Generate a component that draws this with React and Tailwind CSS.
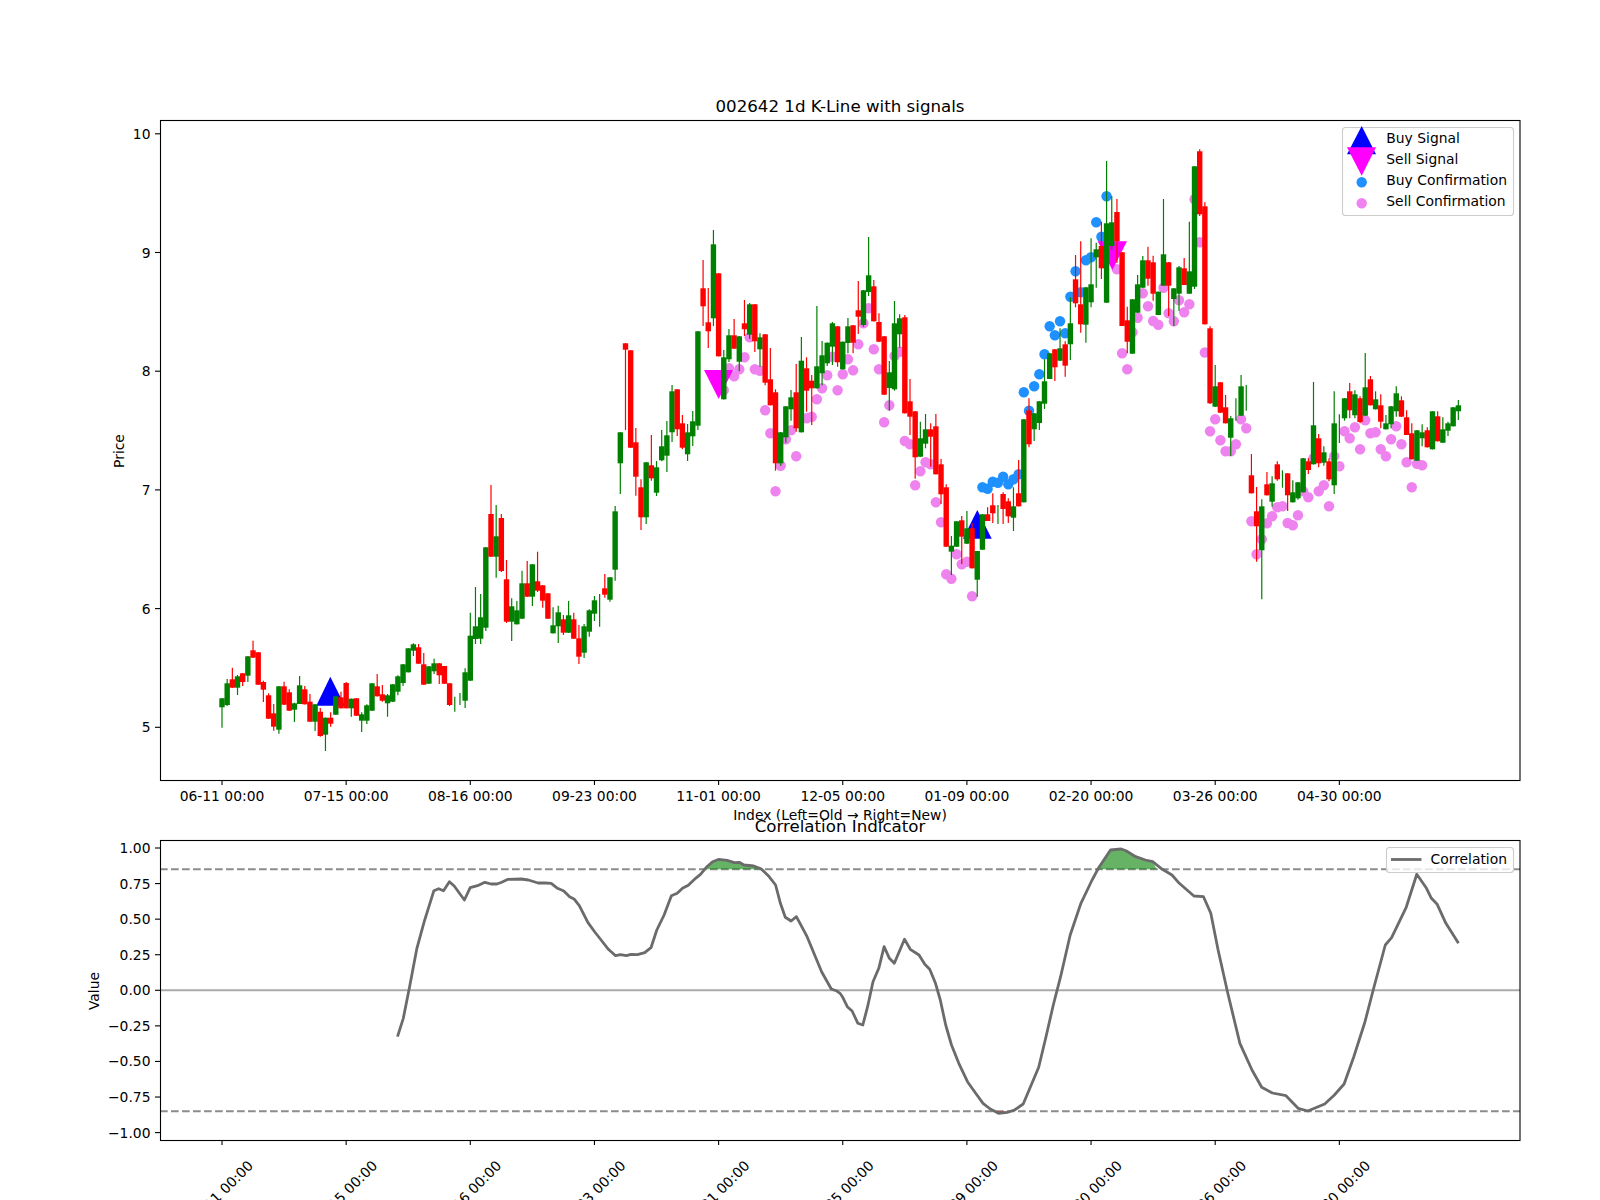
// K-line + correlation chart, values traced from the screenshot in page pixels
const candleX = (i) => 222 + 5.173 * i;

const COLORS = { r: "#ff0000", g: "#008000" };

// [color, bodyTop, bodyBottom, wickTop, wickBottom]
const candles = [
  ["g",698.3,707.3,698,727.7],["g",683.3,705,679,706],["r",679.3,687.7,667.7,688],["g",676.3,687.7,675,695],
  ["r",673.3,682,673,686],["g",656.3,675.7,656,682],["r",650.3,657.7,640.7,658],["r",652.3,684.7,652,685],
  ["r",682,689.7,680.7,702],["r",695.3,718.7,693.3,719],["r",713.3,726.7,704,730.7],["g",686.3,729.7,686,733.7],
  ["r",686.3,704.7,681.7,705],["r",692.3,710.7,689.3,711],["g",703.3,709.7,702.7,722],["g",685.3,704,676,704],
  ["r",689.3,704.3,686,704.5],["r",701.7,721.7,694,722],["g",704.3,721.7,704,731],["r",711.7,736,708,736.7],
  ["g",717.7,734.7,717.5,751],["r",717.7,723.7,712.3,726.7],["g",696.3,714.7,696,715],["r",697.3,708.3,691.7,708.5],
  ["r",683,708.3,682,708.5],["g",698.7,708.3,698.5,716.7],["r",698.3,715.7,698,716],["g",714.3,720.7,712.3,732],
  ["g",705.3,720.7,704.3,724],["g",683.3,710.7,683,711],["r",686.3,696.3,674,696.5],["r",694.3,700.7,685,701.7],
  ["g",695.3,703.3,694,716.7],["g",684.3,701.7,684,702],["g",676.3,691.7,675.3,695.3],["g",664.3,683,664,686],
  ["g",648.3,672.3,648,672.5],["g",644.3,650.7,643.3,656],["r",647.3,663.7,644,664],["r",664.3,684.7,653,685],
  ["g",666.3,683.7,666,684],["g",663.3,671.3,658.7,674],["r",663.3,675.3,663,684],["r",666,683.7,666,684],
  ["r",683.3,705,683,706],["g",704,704,696.7,711.7],["g",699,699,693,705],["g",672.3,700.7,668.3,708],
  ["g",635.7,680.7,612.7,681],["g",626.3,639,587,644],["g",617.3,638.7,594,644],["g",547.3,627.7,547,631],
  ["r",514,556.7,485,557],["g",536.3,556.7,505,577.7],["r",518,571,514,572],["r",579.3,621.7,560,623],
  ["g",606.3,621.7,598.3,641],["g",610.3,624.3,601,624.5],["g",583.3,618.7,570.7,619],["r",583.3,596.7,561,597],
  ["g",564.3,596.7,564,606],["r",581.3,590.7,551.7,592],["r",585.3,600.7,585,607.7],["r",593.3,618.7,593,619],
  ["g",625.3,633.3,607.3,633.5],["g",612.3,626.3,605.7,643],["r",619.3,632.7,615,635],["g",615.3,632.7,601,633],
  ["r",619.3,638.7,612.7,639],["r",638.3,656.7,625,664],["g",626.3,652.7,624,658],["g",610.3,631.7,609.3,636.7],
  ["g",600.3,613.7,596,621],["g",610,610,594,626.7],["r",588.3,594.7,574,597.7],["g",577.3,599.7,577,601.7],
  ["g",511.3,569.7,506,580.7],["g",432.3,463.3,432,494],["r",343.3,349.7,343,430],["r",350.3,447.7,350,448],
  ["r",442.3,476.7,428,495.7],["r",487.3,517.3,479.3,530],["g",462.3,517.3,462,524],["r",465.3,478.3,435,480.7],
  ["g",467.3,492.7,461,496],["g",446.3,460.3,430,461.3],["g",435.3,455.7,421,472],["g",391.3,432.3,385,442],
  ["r",389.3,429.3,389,436],["r",423.3,447.7,415,449.3],["g",432.3,454.3,424,461],["g",421.3,436.3,411,446],
  ["g",331.3,425.7,331,430],["r",288.3,306.3,260,326],["r",322.3,331.3,288,348],["g",244.3,318.3,230,326],
  ["r",273.3,356.3,273,356.5],["g",357.3,399.3,350,399.5],["g",335.3,359.3,329,362],["r",335.3,348.7,319,349],
  ["g",336.3,361.7,336,371.3],["r",323.3,329.3,300,336],["g",304.3,334.7,303,338.7],["r",304.3,341.3,304,352],
  ["g",337.3,349.3,333.3,366.7],["r",334.3,382.7,334,385.3],["r",379.3,405.3,348,405.5],["r",392.3,463.3,389.3,470.7],
  ["g",432.3,463.3,432,465.7],["g",406.3,437.3,406,442.7],["g",397.3,409.3,390,420.7],["r",392.3,428.3,364,431.7],
  ["g",360.7,432.3,337,432.5],["r",368.3,390.7,357.3,411.7],["r",380.7,388.3,375,425],["g",366.3,388.3,306,388.5],
  ["g",355.3,373.3,341,385.3],["g",342.7,363.3,342.5,366],["g",323.3,346.7,322,365],["r",326.3,362.3,326,366.7],
  ["g",341.7,369.3,341.5,369.5],["g",326.3,343,318,353.3],["r",325.3,342.7,325,353.3],["r",310.3,316.7,281,334],
  ["g",290.3,325,290,326.7],["g",275.3,292,237,296],["r",286.3,321.3,280,321.5],["r",322,341.7,313.3,342],
  ["r",336.3,394.7,336,395],["g",372.3,388,361,410.7],["g",323.3,389.3,301,390.7],["g",318.3,334.3,314.3,347.7],
  ["r",317.3,413.3,315,413.5],["r",401.3,416.7,379,435],["r",411.3,457.3,411,478.7],["g",438.3,456.7,421.7,457],
  ["g",429.3,443.7,414,448.3],["r",429.3,436.7,423.3,466.7],["r",426.3,474.3,414,474.5],["r",464.3,494.3,459,504],
  ["r",487.3,546.7,484.3,547],["g",545.7,551.7,536,575],["g",521.3,546.7,521,547],["r",520.3,536.7,516,564],
  ["g",528.3,543.7,511,544],["r",528.3,568.3,523,568.5],["g",551,579.7,551,596.7],["g",514.3,549.7,514,550],
  ["r",514.3,521,507.3,521],["r",505.3,513.3,493.3,523],["g",514,514,505,524],["r",494,509,492.3,524],
  ["r",501.3,516.3,498.3,523],["g",506.3,517.7,487.3,531],["r",493.3,506.3,460,506.5],["g",419.3,502.3,419,502.5],
  ["r",410.3,444.3,398.3,447.3],["g",413.3,429.3,413,441],["g",401.3,423,401,430],["g",381.3,403.7,359.3,409],
  ["g",353.3,379,353,379],["r",349.3,367.3,349,381],["g",348.3,360.7,328.3,361],["r",344.3,365.7,341.3,376.7],
  ["g",323.3,344.3,297.3,360],["r",279.3,303.3,255,307.3],["r",304.3,324.3,241.3,332.7],["g",287.3,324.7,287,342.7],
  ["g",284.3,302.3,238.3,307.3],["g",249.3,257.3,242.7,287.7],["r",246,268.3,221.7,279],["g",223.3,302.7,161,303],
  ["g",222.3,246,196,250],["r",212,241.3,199,263],["r",252.3,326,252,326],["r",320.3,341.7,306.7,353.3],
  ["g",299.3,353.7,299,354],["g",284.3,312.7,275,313],["g",260.3,287.7,256,288],["r",260.3,278.7,246.7,285.7],
  ["r",262.3,293.7,255.7,300.7],["g",291.7,315,291.5,315],["g",254.3,285.7,199,286],["r",262.3,285.7,262,316],
  ["g",288.3,299,288,326],["g",267.3,293.7,266,311],["r",268.3,285,258,285],["g",271.3,293.7,221.7,294],
  ["g",166.3,286.7,166,289],["r",151.3,214.3,149.3,216],["r",206.3,324.3,202.3,324.5],["r",328.3,403.3,326.3,404],
  ["g",386.3,406.7,365,407],["r",382.3,412.7,382,413],["r",407.3,423.3,395,423.5],["g",418.3,437.7,416,456],
  ["g",410,410,398.3,420.7],["g",386.3,415.7,375,416],["g",398,398,385,410.7],["r",475.3,493.3,454,493.5],
  ["r",511.3,526.3,487,561.7],["g",506.3,550.3,499.3,599.3],["r",484.3,495.3,472,495.5],["g",483.3,501.7,476.3,506.7],
  ["r",464.3,479.3,461.3,480.7],["g",479,479,470.3,487.7],["r",473.3,495.3,473,511],["g",492.3,502.3,480.3,502.5],
  ["g",482.3,498.3,482,499.7],["g",458.3,492.3,458,492.5],["r",461.3,470,458.3,474],["g",425.3,464.3,382,464.5],
  ["r",438.3,463.3,434,467.3],["g",452.3,462.7,446.3,465.7],["r",461.3,479.3,458.3,481.3],["g",423.3,485.3,391.3,494],
  ["g",430,430,414.3,443],["g",398.3,418.3,398,420.7],["r",391.3,410.3,383,418.3],["g",394.3,415.3,390.3,418.3],
  ["r",398.3,422,396.3,423.3],["g",387.3,415.7,353,416],["r",379.3,405.3,376,405.5],["g",399.3,409.3,391.3,409.5],
  ["r",405.3,421.7,394.3,428.3],["g",423.3,429.3,415,429.5],["g",406.3,424.3,406,428.3],["g",393.3,411.3,386.3,416.7],
  ["r",400.3,416.7,396.3,417],["r",417.3,435,410.3,435],["r",433.3,459.3,423.3,459.5],["g",430.3,460.7,430,461],
  ["g",432.3,438.3,424.3,446.3],["r",430.3,447.3,427.3,447.5],["g",411.3,449.3,411,449.5],["r",416.3,441.3,411.3,441.5],
  ["g",429.3,442.7,417.3,443],["g",423.3,430.7,421.7,436],["g",407.3,426.3,407,426.5],["g",405.3,411.3,400,420],
];

// [candle index, y]
const sellDots = [
  [97,390.3],[98,368.3],[99,376.3],[100,369.3],[101,357.3],[102,337.3],[103,369.3],[104,370.7],[105,410.3],
  [106,433.3],[107,491.3],[108,465.7],[109,439.3],[110,430.3],[111,456.3],[113,418.3],[114,416.7],[115,399.3],
  [116,388.3],[117,375.3],[118,356.7],[119,390.3],[120,374.3],[121,359.3],[122,370.3],[123,344.3],[124,323.3],
  [125,308.3],[126,349.3],[127,369.3],[128,422.3],[129,405.3],[130,356],[131,351.7],[132,441],[133,444.3],
  [134,485.3],[135,471.3],[136,462.3],[137,464.3],[138,502.3],[139,522.3],[140,574.3],[141,578.7],[142,554.3],
  [143,564.3],[144,561.7],[145,596.3],[173,269.3],[174,353.3],[175,369.3],[176,332.3],[177,317.7],[178,293.3],
  [179,306.3],[180,321],[181,324.7],[182,287.7],[183,313.3],[184,321.3],[185,300.3],[186,312.3],[187,304.3],
  [188,199.3],[189,242.3],[190,352.5],[191,431.3],[192,419.3],[193,440.3],[194,451.3],[195,451.3],[196,444.3],
  [197,419.3],[198,428.3],[199,521.3],[200,554.3],[201,539.3],[202,523.3],[203,516.3],[204,507.3],[205,506.3],
  [206,523],[207,525.3],[208,515.3],[209,491.3],[210,497.3],[211,458.3],[212,491.3],[213,485.3],[214,506.3],
  [215,456.3],[216,466.3],[217,431.3],[218,438.3],[219,427.3],[220,449.3],[221,420.3],[222,433.3],[223,432.3],
  [224,449.3],[225,456.3],[226,439.3],[227,426.3],[228,444.3],[229,462.3],[230,487.3],[231,463.7],[232,465.3],
];

const buyDots = [
  [147,487.3],[148,488.7],[149,481.7],[150,482.7],[151,476.7],[152,484.3],[153,479.3],[154,474.3],[155,392.3],
  [156,410.7],[157,386.3],[158,374.3],[159,354.3],[160,326.3],[161,335.3],[162,321.3],[163,333.3],[164,296.7],
  [165,271.3],[166,292.3],[167,260.3],[168,257.3],[169,222.3],[170,236.7],[171,196.3],
];

const dates = ["06-11","07-15","08-16","09-23","11-01","12-05","01-09","02-20","03-26","04-30"];
const tickX = dates.map((_, i) => 222 + 124.15 * i);

const priceY = (p) => 727.3 - 118.7 * (p - 5);
const corrY = (v) => 990.3 - 142.3 * v;

// correlation line, left and right half read off separately
const leftTrace = [
  [655,770],[667,715],[680,620],[695,505],[710,425],[730,332],[740,326],[750,332],[762,305],[772,318],[793,360],
  [805,323],[820,317],[835,307],[848,312],[860,312],[870,307],[883,298],[910,297],[925,300],[945,309],[960,309],
  [972,310],[985,325],[998,333],[1010,350],[1020,358],[1030,377],[1048,428],[1062,456],[1075,480],[1090,508],
  [1105,527],[1115,524],[1127,527],[1137,523],[1150,524],[1165,518],[1178,503],[1190,450],[1205,405],[1220,347],
  [1232,340],[1243,325],[1255,316],[1270,295],[1280,283],[1292,262],[1305,245],[1318,238],[1335,241],[1350,248],
  [1360,247],[1370,255],[1390,258],[1405,266],[1420,287],[1435,315],[1445,370],[1455,412],[1467,423],[1478,410],
  [1500,470],[1530,575],[1550,627],[1560,632],
].map(([x, y]) => [80 + x / 2.063, 780 + y / 3]);

const rightTrace = [
  [0,640],[5,650],[15,680],[25,693],[37,730],[47,735],[57,680],[68,605],[80,565],[91,500],[102,535],[112,550],
  [133,478],[145,508],[163,525],[175,553],[185,568],[197,610],[207,660],[218,735],[230,795],[245,850],[263,905],
  [280,940],[295,970],[310,987],[327,1000],[345,997],[360,990],[378,972],[410,862],[425,770],[440,675],[455,590],
  [475,465],[497,370],[520,300],[535,260],[558,210],[580,207],[590,212],[610,230],[630,240],[645,245],[665,268],
  [685,285],[700,310],[730,348],[750,350],[765,400],[780,510],[800,640],[825,790],[850,870],[870,922],[892,939],
  [920,947],[945,985],[965,993],[1000,972],[1020,945],[1040,912],[1060,830],[1083,725],[1100,630],[1125,495],
  [1138,473],[1168,382],[1190,283],[1210,325],[1220,355],[1232,373],[1250,430],[1276,490],
].map(([x, y]) => [840 + x / 2.063, 780 + y / 3]);

const corrLine = [...leftTrace, ...rightTrace];
const toPoints = (pts) => pts.map(([x, y]) => `${x.toFixed(1)},${y.toFixed(1)}`).join(" ");

const upper = 869.3;
const lower = 1111.2;
const aboveBand = corrLine.filter(([, y]) => y < upper);
const firstHump = aboveBand.filter(([x]) => x < 900);
const secondHump = aboveBand.filter(([x]) => x >= 900);
const belowBand = corrLine.filter(([, y]) => y > lower);

function hump(pts, base) {
  const [x0] = pts[0];
  const [x1] = pts[pts.length - 1];
  return toPoints([[x0 - 4, base], ...pts, [x1 + 4, base]]);
}

function Frame({ top, bottom }) {
  return <rect x="160.5" y={top} width="1359.5" height={bottom - top} fill="none" stroke="#000" strokeWidth="1.1" />;
}

function Candles() {
  return candles.map(([c, t, b, wt, wb], i) => {
    const x = candleX(i);
    return (
      <g key={i} fill={COLORS[c]} stroke={COLORS[c]}>
        <line x1={x} x2={x} y1={wt} y2={wb} strokeWidth="1.2" />
        {b > t && <rect x={x - 2.7} y={t} width="5.4" height={b - t} stroke="none" />}
      </g>
    );
  });
}

function KLineChart() {
  return (
    <svg width="1600" height="700" viewBox="0 120 1600 700" className="block overflow-visible shrink-0">
      {sellDots.map(([i, y]) => <circle key={i} cx={candleX(i)} cy={y} r="5.2" fill="#ee82ee" />)}
      {buyDots.map(([i, y]) => <circle key={i} cx={candleX(i)} cy={y} r="5.2" fill="#1e90ff" />)}
      <polygon points="330.3,676.7 316.3,705.7 344.8,705.7" fill="#0000ff" />
      <polygon points="977.3,510 963,538.7 991.7,538.7" fill="#0000ff" />
      <polygon points="704,370 733,370 718.7,399" fill="#ff00ff" />
      <polygon points="1097.7,241.3 1127,241.3 1112.3,270" fill="#ff00ff" />
      <Candles />
      <Frame top={120.5} bottom={780.5} />

      {[5, 6, 7, 8, 9, 10].map((p) => (
        <g key={p}>
          <line x1="155" x2="160" y1={priceY(p)} y2={priceY(p)} stroke="#000" strokeWidth="1.1" />
          <text x="150.5" y={priceY(p) + 5} textAnchor="end">{p}</text>
        </g>
      ))}
      {tickX.map((x, i) => (
        <g key={x}>
          <line x1={x} x2={x} y1="780" y2="785" stroke="#000" strokeWidth="1.1" />
          <text x={x} y="801" textAnchor="middle">{dates[i]} 00:00</text>
        </g>
      ))}
      <text x="840" y="820" textAnchor="middle">Index (Left=Old → Right=New)</text>
      <text x="124" y="451" textAnchor="middle" transform="rotate(-90 124 451)">Price</text>

      {/* legend */}
      <rect x="1342.5" y="127.5" width="171" height="88" rx="3" fill="#fff" fillOpacity="0.8" stroke="#ccc" strokeWidth="1.1" />
      <polygon points="1361.7,126 1347,154.3 1376,154.3" fill="#0000ff" />
      <polygon points="1347,147.3 1376,147.3 1361.7,175.7" fill="#ff00ff" />
      <circle cx="1361.7" cy="182.3" r="5.2" fill="#1e90ff" />
      <circle cx="1361.7" cy="203.3" r="5.2" fill="#ee82ee" />
      <text x="1386.3" y="143.3">Buy Signal</text>
      <text x="1386.3" y="164.3">Sell Signal</text>
      <text x="1386.3" y="185.2">Buy Confirmation</text>
      <text x="1386.3" y="206.2">Sell Confirmation</text>
    </svg>
  );
}

function CorrelationChart() {
  return (
    <svg width="1600" height="380" viewBox="0 820 1600 380" className="block overflow-visible shrink-0">
      <text x="840" y="832" textAnchor="middle" className="text-[16.67px]">Correlation Indicator</text>

      <line x1="160" x2="1520" y1={corrY(0)} y2={corrY(0)} stroke="#aaaaaa" strokeWidth="2" />
      <line x1="160" x2="1520" y1={upper} y2={upper} stroke="#8c8c8c" strokeWidth="2.1" strokeDasharray="7.7 3.3" />
      <line x1="160" x2="1520" y1={lower} y2={lower} stroke="#8c8c8c" strokeWidth="2.1" strokeDasharray="7.7 3.3" />

      <polygon points={hump(firstHump, upper)} fill="#008000" fillOpacity="0.6" />
      <polygon points={hump(secondHump, upper)} fill="#008000" fillOpacity="0.6" />
      <polygon points={hump(belowBand, lower)} fill="#ff0000" fillOpacity="0.6" />
      <polyline points={toPoints(corrLine)} fill="none" stroke="#6b6b6b" strokeWidth="2.8" strokeLinejoin="round" />
      <Frame top={840.5} bottom={1140.5} />

      {[1, 0.75, 0.5, 0.25, 0, -0.25, -0.5, -0.75, -1].map((v) => (
        <g key={v}>
          <line x1="155" x2="160" y1={corrY(v)} y2={corrY(v)} stroke="#000" strokeWidth="1.1" />
          <text x="150.5" y={corrY(v) + 5} textAnchor="end">
            {(v < 0 ? "\u2212" : "") + Math.abs(v).toFixed(2)}
          </text>
        </g>
      ))}
      {tickX.map((x, i) => (
        <g key={x}>
          <line x1={x} x2={x} y1="1140" y2="1145" stroke="#000" strokeWidth="1.1" />
          <text x={x - 1.5} y="1193" textAnchor="middle" dominantBaseline="central" transform={`rotate(-45 ${x - 1.5} 1193)`}>
            {dates[i]} 00:00
          </text>
        </g>
      ))}
      <text x="99" y="991" textAnchor="middle" transform="rotate(-90 99 991)">Value</text>

      <rect x="1386.5" y="847.5" width="127" height="25" rx="3" fill="#fff" fillOpacity="0.8" stroke="#ccc" strokeWidth="1.1" />
      <line x1="1391" x2="1421.5" y1="859.5" y2="859.5" stroke="#6b6b6b" strokeWidth="2.8" />
      <text x="1430.5" y="863.5">Correlation</text>
    </svg>
  );
}

export default function App() {
  return (
    <div className="w-[1600px] h-[1200px] overflow-hidden bg-white flex flex-col text-[13.89px] text-black font-['DejaVu_Sans',sans-serif]">
      <div className="h-[120px] shrink-0 ml-[160px] w-[1360px] flex items-end justify-center pb-[1px] text-[16.67px]">
        002642 1d K-Line with signals
      </div>
      <KLineChart />
      <CorrelationChart />
    </div>
  );
}
